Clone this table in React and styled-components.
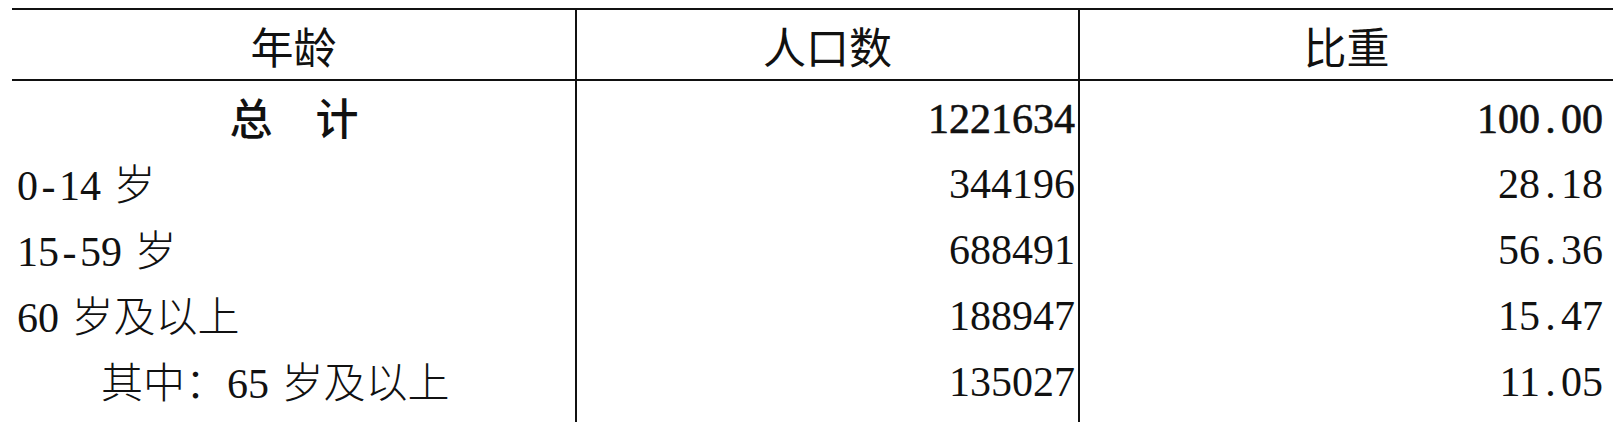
import React from "react";
import styled, { createGlobalStyle } from "styled-components";

const GlobalStyle = createGlobalStyle`
  html, body {
    margin: 0;
    padding: 0;
    background: #fff;
    overflow: hidden;
  }
`;

const Table = styled.table`
  margin: 8px 0 0 12px;
  width: 1601px;
  table-layout: fixed;
  border-collapse: collapse;
  border-top: 2px solid #111;
  font-family: "Liberation Serif", serif;
`;

const HeadCell = styled.th`
  height: 69px;
  padding: 0;
  font-family: "Noto Sans CJK SC", sans-serif;
  font-size: 43px;
  font-weight: 400;
  color: #111;
  text-align: center;
  border-bottom: 2px solid #111;
  border-left: ${(p) => (p.$first ? "none" : "2px solid #111")};
`;

const Cell = styled.td`
  height: ${(p) => (p.$last ? 90 : 66)}px;
  padding-top: 10px;
  padding-bottom: ${(p) => (p.$last ? 24 : 0)}px;
  padding-right: ${(p) => p.$padRight || 4}px;
  padding-left: ${(p) => (p.$indent ? 89 : 5)}px;
  box-sizing: border-box;
  font-family: "Liberation Serif", serif;
  font-size: 42px;
  line-height: 1;
  color: #111;
  white-space: nowrap;
  text-align: ${(p) => p.$align || "left"};
  border-left: ${(p) => (p.$first ? "none" : "2px solid #111")};
`;

const Num = styled.span`
  font-family: "Liberation Serif", serif;
  ${(p) => p.$bold && "-webkit-text-stroke: 0.6px #111;"}
`;

const Dash = styled.span`
  display: inline-block;
  width: 0.5em;
  text-align: center;
`;

const Han = styled.span`
  font-family: "Noto Sans CJK SC", sans-serif;
  font-weight: 300;
  margin-left: ${(p) => (p.$gap ? "0.3em" : "0")};
`;

const TotalLabel = styled.span`
  font-family: "Noto Sans CJK SC", sans-serif;
  font-weight: 500;
  font-size: 43px;
`;

const Dot = styled.span`
  display: inline-block;
  width: 0.5em;
  text-align: center;
`;

const rows = [
  { num: "0-14", han: "岁", count: "344196", share: "28.18" },
  { num: "15-59", han: "岁", count: "688491", share: "56.36" },
  { num: "60", han: "岁及以上", count: "188947", share: "15.47" },
  { pre: "其中：", num: "65", han: "岁及以上", count: "135027", share: "11.05", indent: true },
];

const Share = ({ value, bold }) => {
  const [a, b] = value.split(".");
  return (
    <Num $bold={bold}>
      {a}
      <Dot>.</Dot>
      {b}
    </Num>
  );
};

const Range = ({ value }) => {
  const parts = value.split("-");
  return (
    <Num>
      {parts[0]}
      {parts.length > 1 && (
        <>
          <Dash>-</Dash>
          {parts[1]}
        </>
      )}
    </Num>
  );
};

const App = () => {
  return (
    <>
      <GlobalStyle />
      <Table>
        <colgroup>
          <col style={{ width: 564 }} />
          <col style={{ width: 503 }} />
          <col style={{ width: 534 }} />
        </colgroup>
        <thead>
          <tr>
            <HeadCell $first>年龄</HeadCell>
            <HeadCell>人口数</HeadCell>
            <HeadCell>比重</HeadCell>
          </tr>
        </thead>
        <tbody>
          <tr>
            <Cell $first $align="center">
              <TotalLabel>总　计</TotalLabel>
            </Cell>
            <Cell $align="right" $padRight={3}>
              <Num $bold>1221634</Num>
            </Cell>
            <Cell $align="right" $padRight={10}>
              <Share value="100.00" bold />
            </Cell>
          </tr>
          {rows.map((row, idx) => {
            const last = idx === rows.length - 1;
            return (
              <tr key={idx}>
                <Cell $first $indent={row.indent} $last={last}>
                  {row.pre && <Han>{row.pre}</Han>}
                  <Range value={row.num} />
                  <Han $gap>{row.han}</Han>
                </Cell>
                <Cell $align="right" $padRight={3} $last={last}>
                  <Num>{row.count}</Num>
                </Cell>
                <Cell $align="right" $padRight={10} $last={last}>
                  <Share value={row.share} />
                </Cell>
              </tr>
            );
          })}
        </tbody>
      </Table>
    </>
  );
};

export default App;
